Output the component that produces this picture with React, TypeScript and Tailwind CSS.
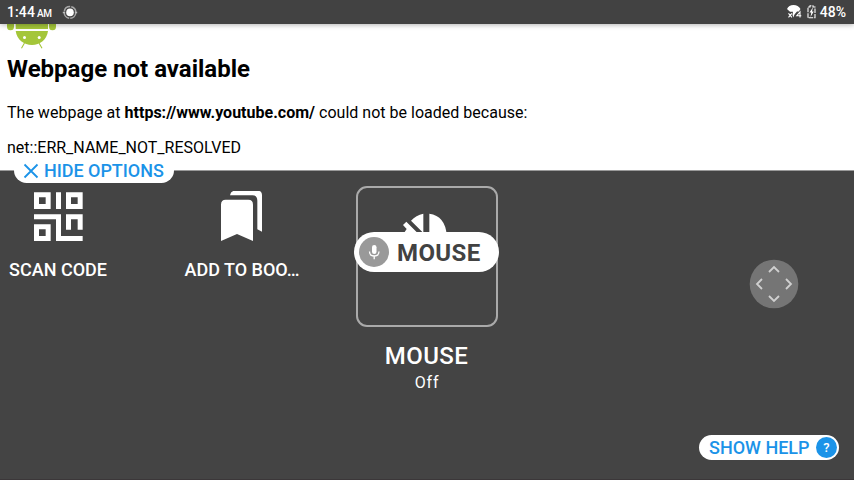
import type { ReactNode } from "react";

function StatusBar() {
  return (
    <header className="relative z-10 flex h-6 shrink-0 items-center bg-[#424242] pl-[7px] pr-2 text-white shadow-[0_1px_5px_rgba(0,0,0,0.3)]">
      <span className="text-[14px] font-medium leading-6 tracking-[0.1px]">1:44</span>
      <span className="ml-[2px] pt-[3px] text-[10px] font-medium leading-[21px] tracking-[-0.3px]">AM</span>
      <svg className="ml-[10px]" width="16" height="16" viewBox="0 0 16 16" fill="none">
        <circle cx="8" cy="8.4" r="3.8" fill="#fff" />
        <circle cx="8" cy="8.4" r="5.8" stroke="#a8a8a8" strokeWidth="1.5" strokeDasharray="8 1.11" strokeDashoffset="-.6" />
        <path d="M.8 8.400h2.400M12.800 8.400h2.400" stroke="#bdbdbd" strokeWidth="1.500" />
      </svg>
      <div className="ml-auto flex items-center">
        <svg width="16" height="14" viewBox="0 0 16 14">
          <path d="M0 4Q1.800 0 6.500 0T13.500 4L11.800 6.500H10L7.500 9.500 6.300 12.500 5.500 9.700 6 6.800H3Z" fill="#fff" />
          <path d="m1.500 8.300 3.400 4M4.900 8.300l-3.400 4M13 12.500V7L9.800 10.700h4.500" stroke="#fff" strokeWidth="1.100" fill="none" />
        </svg>
        <svg className="ml-[4px]" width="9" height="14" viewBox="0 0 9 14" fill="none">
          <path d="M1 12.800V2h2V.7h3V2h2v10.800Z" stroke="#fff" strokeWidth="1.100" strokeDasharray="4.500 1" />
          <path d="M6 2.200 2.500 7.500h1.800l-.8 4.500 3.200-5.500H5Z" fill="#fff" />
        </svg>
        <span className="ml-[4px] text-[14px] font-medium leading-6">48%</span>
      </div>
    </header>
  );
}

function Webpage() {
  return (
    <main className="h-[147px] shrink-0 overflow-hidden border-b border-[#9a9a9a] bg-white pl-[7px] text-black">
      <svg className="block" width="50" height="26" viewBox="0 0 50 26">
        <g fill="#a4c639">
          <path d="M0 0h7v2.800a3.500 3.500 0 0 1-7 0ZM42 0h7v2.800a3.500 3.500 0 0 1-7 0ZM8.700 0H41v5H8.700ZM8.700 7H41C40 15.500 33 21 25 21S9.700 15.500 8.700 7Z" />
          <path d="m17.500 19-3 5.200M32 19l3 5.200" stroke="#a4c639" strokeWidth="1.100" />
        </g>
        <circle cx="17.500" cy="13.600" r="1.500" fill="#fff" />
        <circle cx="32.200" cy="13.600" r="1.500" fill="#fff" />
      </svg>
      <h1 className="mt-[4px] text-[24px] font-bold leading-[30px]">Webpage not available</h1>
      <p className="mt-[19px] text-[16px] leading-5 tracking-[0.014px]">
        The webpage at <b>https://www.youtube.com/</b> could not be loaded because:
      </p>
      <p className="mt-[15px] text-[16px] leading-5">net::ERR_NAME_NOT_RESOLVED</p>
    </main>
  );
}

function Option({ icon, label, className }: { icon: ReactNode; label: string; className: string }) {
  return (
    <div className={`flex flex-col items-center ${className}`}>
      {icon}
      <span className="mt-[14px] whitespace-nowrap text-[18px] font-medium leading-6">{label}</span>
    </div>
  );
}

const QrIcon = (
  <svg width="50" height="53" viewBox="0 0 150 159" fill="#fff" fillRule="evenodd">
    <path d="M3 4h50v50H3ZM18 19v20h20V19ZM69 4h15v50H69ZM99 4h50v50H99ZM114 19v20h20V19ZM3 100h50v50H3ZM18 115v20h20v-20ZM3 70h81v65h65v15H69V85H3ZM99 70h50v46h-15V85h-20v31H99Z" />
  </svg>
);

const BookmarksIcon = (
  <svg width="50" height="53" viewBox="0 0 150 159" fill="#fff">
    <path d="M12 41Q12 26 26 26H94Q108 26 108 41V150L60 129 12 150ZM39 13Q41-1 55-1H121Q135-1 135 13V122L121 115V29Q121 13 106 13Z" />
  </svg>
);

function MouseTile() {
  return (
    <div className="ml-[56px] mt-[15px] flex w-[142px] flex-col items-center">
      <div className="relative h-[141px] w-[142px] rounded-[11px] border-2 border-[#aaa]">
        <svg className="absolute left-[44px] top-[25px]" width="48" height="24" viewBox="0 0 144 72" fill="#fff">
          <path d="M64 2V60L27 23Q42 7 64 2ZM82 2Q130 9 134 66H82ZM3 36 13 26 46 59V66H8V57L14 48Z" />
        </svg>
        <div className="absolute left-[-4px] top-[44px] flex h-10 w-[145px] items-center rounded-full bg-white pl-[5px] text-[#424242]">
          <div className="flex size-[30px] items-center justify-center rounded-full bg-[#999]">
            <svg width="12" height="16" viewBox="0 0 12 16" fill="none">
              <rect x="4" y="1" width="4.500" height="9" rx="2.250" fill="#fff" />
              <path d="M1.500 7.500q0 4.500 4.700 4.500T11 7.500M6.200 12v3.300" stroke="#fff" strokeWidth="1.300" />
            </svg>
          </div>
          <span className="ml-2 pt-[2px] text-[24px] font-bold leading-10 tracking-[0.4px]">MOUSE</span>
        </div>
      </div>
      <span className="mt-[13px] pr-[1px] text-[24px] font-medium leading-8 tracking-[0.4px]">MOUSE</span>
      <span className="mt-[1px] text-[16px] leading-5 tracking-[0.8px]">Off</span>
    </div>
  );
}

function DirectionPad() {
  return (
    <svg className="ml-[251px] mt-[88px]" width="50" height="50" viewBox="0 0 50 50" fill="none">
      <circle cx="25" cy="25" r="24.300" fill="#757575" />
      <path d="m20 13 5-5 5 5M20 37l5 5 5-5M13 20l-5 5 5 5M37 20l5 5-5 5" stroke="#d0d0d0" strokeWidth="1.800" />
    </svg>
  );
}

export default function App() {
  return (
    <div className="flex h-[480px] w-[854px] flex-col overflow-hidden bg-[#444] font-[Roboto,sans-serif]">
      <StatusBar />
      <Webpage />
      <section className="relative flex grow flex-col border-b border-[#3b3739] text-white">
        <div className="flex items-start">
          <Option icon={QrIcon} label="SCAN CODE" className="w-[116px] pt-5" />
          <Option icon={BookmarksIcon} label="ADD TO BOO…" className="ml-[68px] w-[116px] pt-5" />
          <MouseTile />
          <DirectionPad />
        </div>
        <button className="absolute left-[14px] top-[-13px] flex h-[25px] w-[160px] items-center rounded-full bg-white pl-[9px] text-[18px] font-medium leading-[25px] text-[#1b93e8]">
          <svg width="16" height="16" viewBox="0 0 16 16" fill="none" stroke="currentColor" strokeWidth="1.800">
            <path d="m1.500 1.500 13 13M14.500 1.500l-13 13" />
          </svg>
          <span className="ml-[5px] whitespace-nowrap tracking-[-0.04px]">HIDE OPTIONS</span>
        </button>
        <button className="mb-[19px] mr-[15px] mt-auto flex h-[25px] w-[140px] items-center self-end rounded-full bg-white pl-[10px] text-[18px] font-medium leading-[25px] text-[#1b93e8]">
          <span className="whitespace-nowrap">SHOW HELP</span>
          <span className="ml-auto mr-[2px] flex size-[21px] items-center justify-center rounded-full bg-[#1b93e8] text-[13px] font-medium text-white">?</span>
        </button>
      </section>
    </div>
  );
}
